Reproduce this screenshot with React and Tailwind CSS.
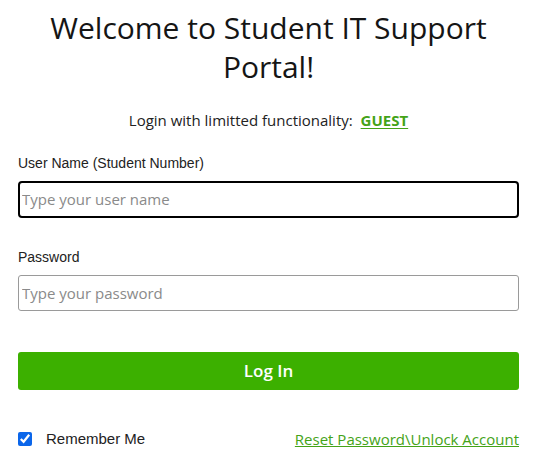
import React from 'react';

const App = () => {
  return (
    <div className="w-[537px] h-[455px] bg-white px-[18px] overflow-hidden">
      <h1 className="pt-[8px] text-center text-[30px] leading-[39px] font-medium text-[#151515] font-['Open_Sans',sans-serif]">
        Welcome to Student IT Support Portal!
      </h1>

      <p className="mt-[23px] text-center text-[15px] text-[#222] font-['Open_Sans',sans-serif]">
        Login with limitted functionality:{' '}
        <a href="#" className="ml-1 font-bold text-[#44a318] underline underline-offset-2">GUEST</a>
      </p>

      <form className="mt-[21px] font-['Liberation_Sans',Arial,sans-serif]">
        <label className="block text-[14px] text-[#222]">User Name (Student Number)</label>
        <input
          type="text"
          placeholder="Type your user name"
          className="mt-[7px] block w-full h-[37px] px-[2px] rounded-[4px] border-2 border-black text-[15px] outline-none placeholder:text-[#8a8a8a] font-['Open_Sans',sans-serif]"
        />

        <label className="mt-[29px] block text-[14px] text-[#222]">Password</label>
        <input
          type="password"
          placeholder="Type your password"
          className="mt-[7px] block w-full h-[36px] px-[3px] rounded-[3px] border border-[#9a9a9a] text-[15px] outline-none placeholder:text-[#8a8a8a] font-['Open_Sans',sans-serif]"
        />

        <button
          type="button"
          className="mt-[41px] block w-full h-[38px] rounded-[3px] bg-[#3cb000] text-white text-[17px] font-semibold font-['Open_Sans',sans-serif]"
        >
          Log In
        </button>

        <div className="mt-[38px] flex items-center justify-between">
          <label className="flex items-center gap-[14px] text-[15px] text-[#222]">
            <input type="checkbox" defaultChecked className="w-[14px] h-[14px] m-0 accent-[#0b66ea]" />
            Remember Me
          </label>
          <a href="#" className="text-[15px] text-[#44a318] underline underline-offset-1 font-['Open_Sans',sans-serif]">
            Reset Password\Unlock Account
          </a>
        </div>
      </form>
    </div>
  );
};

export default App;
